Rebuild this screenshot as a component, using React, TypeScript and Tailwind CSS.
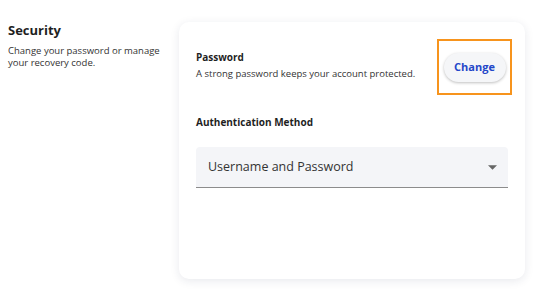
export default function App() {
  return (
    <main className="w-[534px] h-[290px] bg-white flex font-['Open_Sans',sans-serif] text-[#1f1f1f] overflow-hidden">
      {/* Intro */}
      <section className="w-[179px] shrink-0 pl-2 pt-[22px] pr-2">
        <h2 className="text-[13px] font-bold leading-4 mb-[7px]">Security</h2>
        <p className="text-[9.5px] leading-3 text-[#333]">
          Change your password or manage your recovery code.
        </p>
      </section>

      {/* Card */}
      <section className="mt-[22px] mb-[11px] w-[346px] bg-white rounded-[10px] shadow-[0_2px_10px_rgba(30,40,80,0.10)] pl-[17px] pr-[17px] pt-[17px]">
        <div className="flex items-start justify-between">
          <div className="pt-[12px]">
            <h3 className="text-[10px] font-bold leading-3 mb-[5px]">Password</h3>
            <p className="text-[9.5px] leading-3 text-[#333]">
              A strong password keeps your account protected.
            </p>
          </div>
          <div className="border-2 border-[#f7941d] w-[75px] h-[56px] flex items-center justify-center -mr-[4px]">
            <button className="h-[29px] w-[62px] rounded-full bg-[#f5f6f8] shadow-[0_1px_3px_rgba(0,0,0,0.25)] text-[#2447c9] text-[11px] font-bold">
              Change
            </button>
          </div>
        </div>

        <h3 className="text-[10px] font-bold leading-3 mt-[21px]">Authentication Method</h3>

        <div className="mt-[19px] h-[41px] bg-[#f4f5f8] rounded-t-[4px] border-b border-[#8c8c8c] flex items-center justify-between pl-3 pr-[11px]">
          <span className="text-[12.5px] text-[#333]">Username and Password</span>
          <svg width="9" height="5" viewBox="0 0 10 5">
            <path d="M0 0 L10 0 L5 5 Z" fill="#666" />
          </svg>
        </div>
      </section>
    </main>
  );
}
